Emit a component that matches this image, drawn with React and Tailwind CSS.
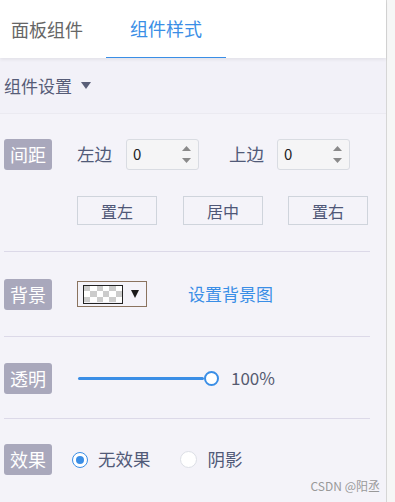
import React from 'react';

const font = { fontFamily: '"Noto Sans CJK SC", "Noto Sans", sans-serif' };

function Label({ children }) {
  return (
    <div className="w-[48px] h-[31px] rounded-[3px] bg-[#a9a8bc] text-white text-[18px] flex items-center justify-center shrink-0">
      {children}
    </div>
  );
}

function NumInput() {
  return (
    <div className="w-[73px] h-[31px] rounded-[3px] border border-[#d9dce2] bg-[#f5f5f6] flex items-center justify-between pl-[6px] pr-[7px]">
      <span className="text-[15px] text-[#222]">0</span>
      <div className="flex flex-col gap-[7px]">
        <svg width="9" height="5" viewBox="0 0 9 5"><path d="M4.5 0 L9 5 L0 5 Z" fill="#8a8a8a" /></svg>
        <svg width="9" height="5" viewBox="0 0 9 5"><path d="M0 0 L9 0 L4.5 5 Z" fill="#8a8a8a" /></svg>
      </div>
    </div>
  );
}

function Btn({ children }) {
  return (
    <div className="w-[80px] h-[29px] border border-[#cfd4dc] flex items-center justify-center text-[16px] text-[#4f5777]">
      {children}
    </div>
  );
}

function Divider() {
  return <div className="w-[366px] h-px bg-[#dcd9e8]" />;
}

function Checker() {
  const cells = [];
  for (let r = 0; r < 3; r++) {
    for (let c = 0; c < 6; c++) {
      cells.push(
        <div key={`${r}-${c}`} className={(r + c) % 2 === 0 ? 'bg-[#cccccc]' : 'bg-white'} />
      );
    }
  }
  return (
    <div className="w-[40px] h-[19px] border border-[#222] grid grid-cols-6 grid-rows-3 overflow-hidden">
      {cells}
    </div>
  );
}

export default function App() {
  return (
    <div className="w-[395px] h-[502px] flex bg-[#f4f3f9] relative overflow-hidden" style={font}>
      <div className="w-[387px] h-full border-r border-[#d6d6d6] flex flex-col">
        <div className="h-[58px] bg-white flex items-end shadow-[0_2px_3px_rgba(0,0,0,0.06)] relative z-10">
          <div className="w-[106px] h-[58px] flex items-center pl-[11px] text-[18px] text-[#666]">面板组件</div>
          <div className="w-[120px] h-[58px] flex items-center justify-center text-[18px] text-[#3a8ee6] border-b border-[#3a8ee6]">组件样式</div>
        </div>
        <div className="h-[56px] bg-[#f2f1f8] flex items-center pl-[4px] text-[17px] text-[#565c77] border-b border-[#ebeaf1]">
          组件设置
          <svg className="ml-[9px]" width="10" height="7" viewBox="0 0 10 7"><path d="M0 0 L10 0 L5 7 Z" fill="#5a5f78" /></svg>
        </div>
        <div className="pl-[4px] flex flex-col text-[#515a78]">
          <div className="mt-[25px] flex items-center h-[31px]">
            <Label>间距</Label>
            <span className="ml-[25px] text-[17.5px]">左边</span>
            <div className="ml-[14px]"><NumInput /></div>
            <span className="ml-[30px] text-[17.5px]">上边</span>
            <div className="ml-[13px]"><NumInput /></div>
          </div>
          <div className="mt-[26px] ml-[73px] flex gap-[26px]">
            <Btn>置左</Btn>
            <Btn>居中</Btn>
            <div className="-ml-px"><Btn>置右</Btn></div>
          </div>
          <div className="mt-[26px]"><Divider /></div>
          <div className="mt-[26px] flex items-center h-[32px]">
            <Label>背景</Label>
            <div className="ml-[25px] w-[70px] h-[26px] border border-[#8a735f] flex items-center pl-[5px] gap-[8px]">
              <Checker />
              <svg width="8" height="8" viewBox="0 0 8 8"><path d="M0 0 L8 0 L4 8 Z" fill="#1a1a1a" /></svg>
            </div>
            <span className="ml-[41px] text-[17px] text-[#3a8ee6]">设置背景图</span>
          </div>
          <div className="mt-[26px]"><Divider /></div>
          <div className="mt-[25px] flex items-center h-[32px]">
            <Label>透明</Label>
            <div className="ml-[26px] flex items-center">
              <div className="w-[126px] h-[3px] bg-[#3a8ee6] rounded-full" />
              <div className="w-[15px] h-[15px] rounded-full border-[2.5px] border-[#3a8ee6] bg-white" />
            </div>
            <span className="ml-[12px] text-[17px] text-[#555a70]">100%</span>
          </div>
          <div className="mt-[24px]"><Divider /></div>
          <div className="mt-[25px] flex items-center h-[31px]">
            <Label>效果</Label>
            <div className="ml-[20px] w-[16px] h-[16px] rounded-full border border-[#3a8ee6] bg-white flex items-center justify-center">
              <div className="w-[8px] h-[8px] rounded-full bg-[#3a8ee6]" />
            </div>
            <span className="ml-[10px] text-[17.5px]">无效果</span>
            <div className="ml-[29px] w-[17px] h-[17px] rounded-full border border-[#dcdfe6] bg-white" />
            <span className="ml-[11px] text-[17.5px]">阴影</span>
          </div>
        </div>
      </div>
      <div className="flex-1 bg-[#f6f6f6]" />
      <div className="absolute right-[15px] bottom-[7px] text-[12px] text-[#999]">CSDN @阳丞</div>
    </div>
  );
}
